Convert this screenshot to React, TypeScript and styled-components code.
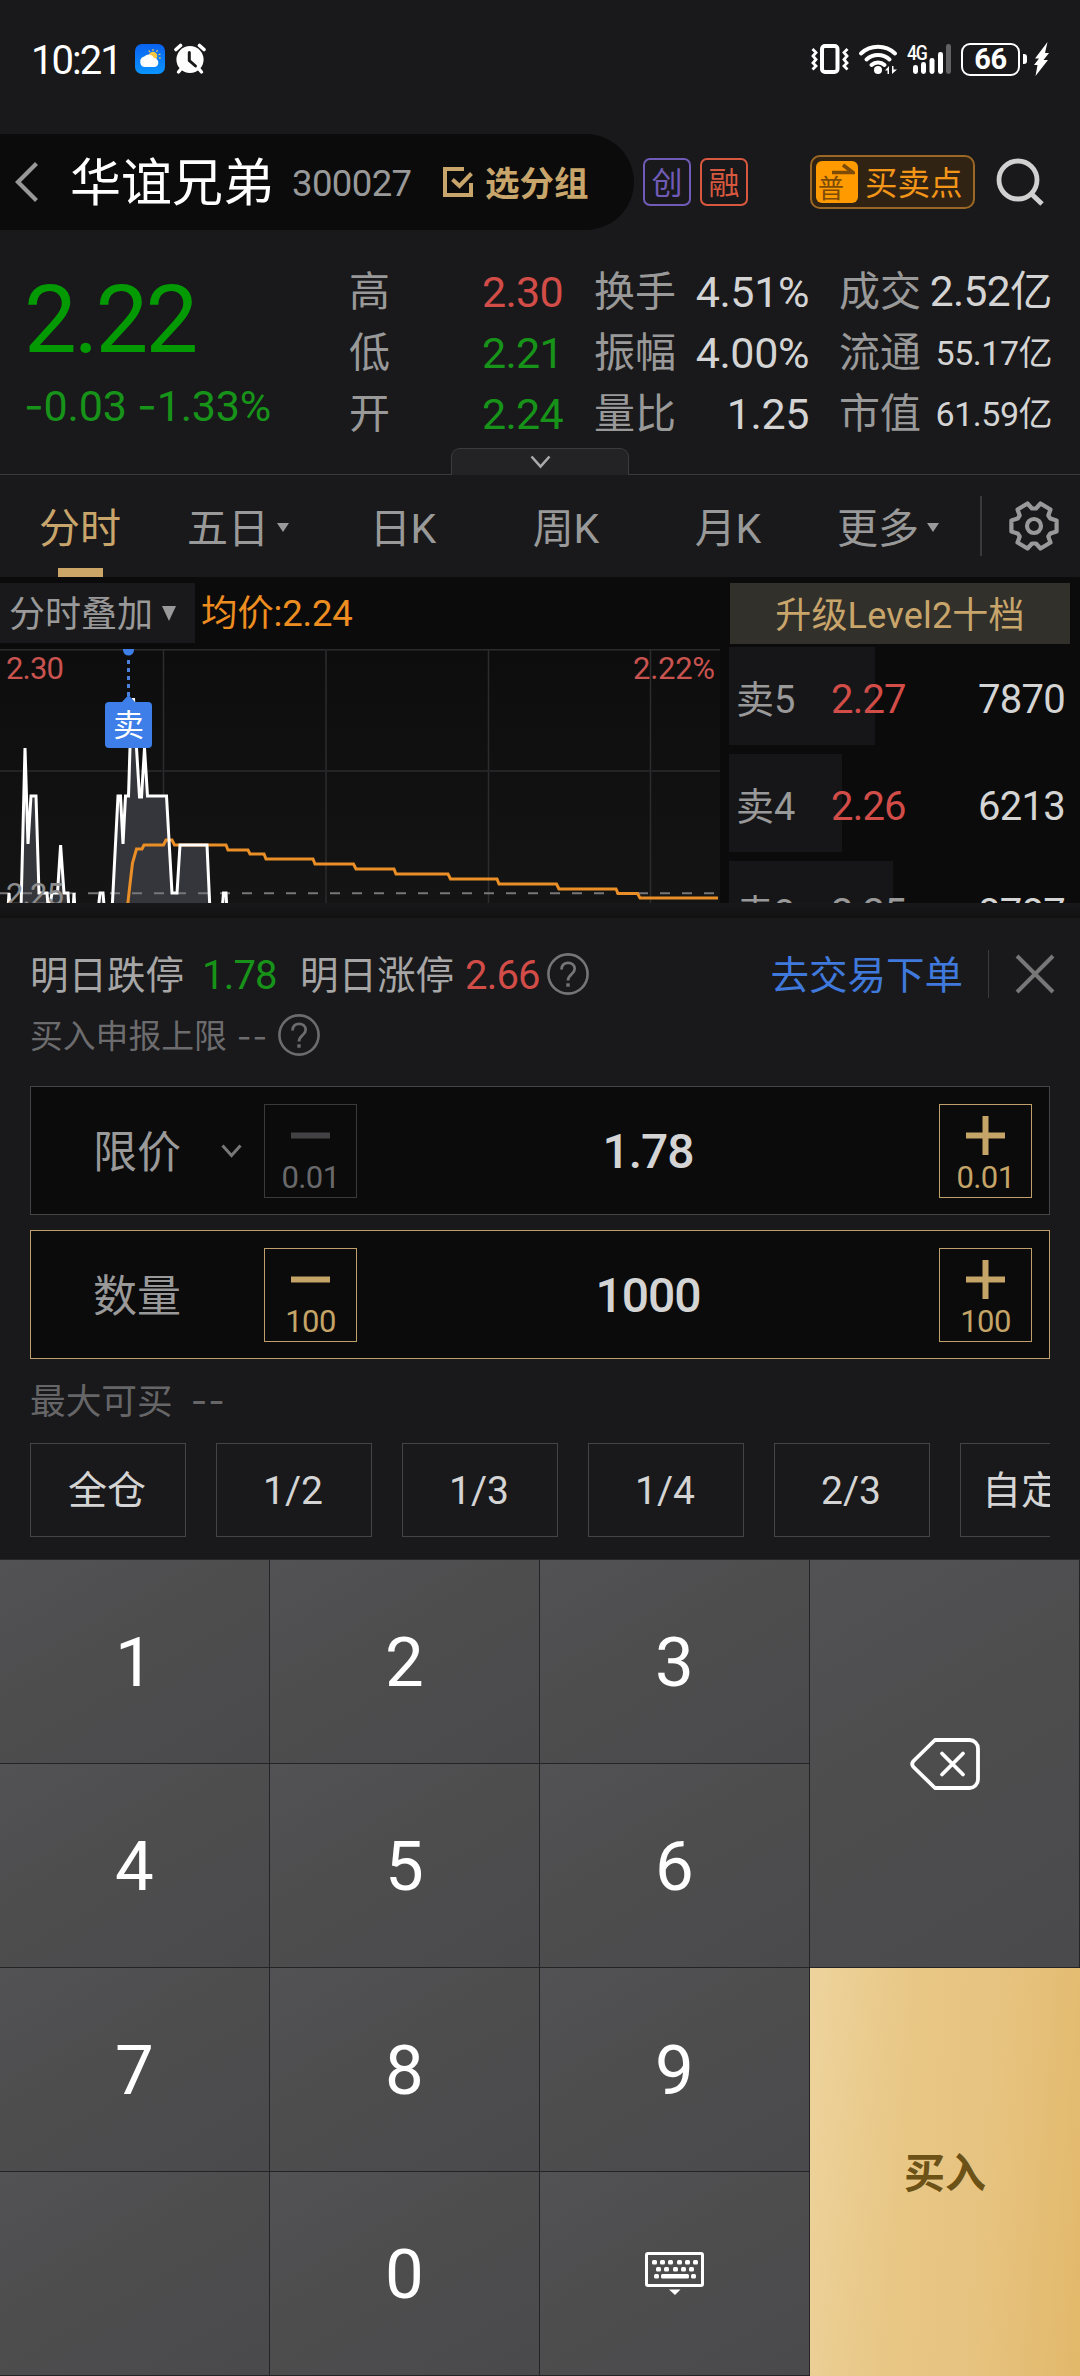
import React from "react";
import styled, { createGlobalStyle } from "styled-components";

const FONT = `Roboto, "Noto Sans CJK SC", sans-serif`;

const C = {
  page: "#19191b",
  ink: "#0b0b0b",
  grey: "#999999",
  dim: "#6c6c6e",
  light: "#d4d4d4",
  gold: "#c8a56a",
  green: "#179319",
  red: "#d24c48",
  orange: "#ee8e20",
  blue: "#4079dc",
  line: "#444446",
};

const Global = createGlobalStyle`
  * { box-sizing: border-box; }
  body { margin: 0; background: ${C.page}; font-family: ${FONT}; }
  svg { display: block; flex: none; }
`;

const Screen = styled.main`
  width: 1080px;
  height: 2376px;
  overflow: hidden;
  display: flex;
  flex-direction: column;
  background: ${C.page};
`;

const Text = styled.span<{ $size: number; $color?: string; $weight?: number; $track?: number; $lh?: number }>`
  display: block;
  flex: none;
  padding-top: 2px;
  margin-bottom: -2px;
  white-space: nowrap;
  font-size: ${(p) => p.$size}px;
  line-height: ${(p) => p.$lh ?? 60}px;
  color: ${(p) => p.$color ?? C.grey};
  font-weight: ${(p) => p.$weight ?? 400};
  letter-spacing: ${(p) => p.$track ?? 0}px;
`;

const Dash = styled.span`
  font-family: Inter, sans-serif;
`;

/* ---------- status bar ---------- */

const StatusBar = styled.header`
  height: 134px;
  flex: none;
  display: flex;
  align-items: flex-start;
  justify-content: space-between;
  padding: 42px 31px 0 31px;
`;
const StatusGroup = styled.div`
  display: flex;
  align-items: center;
  height: 34px;
`;
const Clock = styled(Text)`
  width: 104px;
`;
const Signal = styled.div`
  position: relative;
  width: 46px;
  height: 34px;
  margin: 0 9px 0 8px;
`;
const Network = styled.span`
  position: absolute;
  left: 1px;
  top: 1px;
  font-size: 21px;
  line-height: 20px;
  font-weight: 500;
  letter-spacing: -1.4px;
  color: #fff;
  transform: scaleX(0.84);
  transform-origin: 0 0;
`;
const Battery = styled.div`
  width: 59px;
  height: 33px;
  border: 2.5px solid #fff;
  border-radius: 9px;
  color: #fff;
  font-size: 29px;
  line-height: 29px;
  font-weight: 700;
  letter-spacing: -0.5px;
  text-align: center;
`;
const Nub = styled.i`
  width: 4px;
  height: 10px;
  margin: 0 7px 0 3px;
  border-radius: 0 3px 3px 0;
  background: #fff;
`;

/* ---------- title row ---------- */

const TitleRow = styled.div`
  height: 96px;
  flex: none;
  display: flex;
  align-items: center;
`;
const TitlePill = styled.div`
  width: 634px;
  height: 96px;
  border-radius: 0 48px 48px 0;
  background: ${C.ink};
  display: flex;
  align-items: center;
  padding-left: 14px;
`;
const StockName = styled(Text)`
  width: 222px;
  margin-left: 30px;
`;
const StockCode = styled(Text)`
  width: 151px;
`;
const GroupLabel = styled(Text)`
  margin-left: 12px;
`;
const Badge = styled.span<{ $color: string }>`
  width: 48px;
  height: 48px;
  flex: none;
  margin-left: 9px;
  border: 2px solid ${(p) => p.$color};
  border-radius: 7px;
  color: ${(p) => p.$color};
  font-size: 31px;
  line-height: 47px;
  text-align: center;
`;
const TradePoint = styled.button`
  width: 165px;
  height: 54px;
  flex: none;
  margin: 0 21px 0 62px;
  padding: 0 0 0 4px;
  display: flex;
  align-items: center;
  border: 2px solid #9b6724;
  border-radius: 10px;
  background: #302314;
  font-family: ${FONT};
`;
const TradeMark = styled.span`
  position: relative;
  width: 42px;
  height: 42px;
  flex: none;
  margin-right: 7px;
  padding: 15px 0 0 2px;
  border-radius: 6px;
  background: #ff9a00;
  color: #7c4b08;
  font-size: 26px;
  line-height: 26px;
  text-align: left;
  svg { position: absolute; left: 15px; top: 2px; }
`;

/* ---------- quote ---------- */

const Quote = styled.section`
  position: relative;
  height: 245px;
  flex: none;
  display: flex;
  padding: 30px 0 0 24px;
  border-bottom: 1px solid #3a3a3c;
`;
const PriceBlock = styled.div`
  width: 325px;
  flex: none;
  padding-top: 11px;
`;
const Stats = styled.div`
  display: grid;
  grid-template-columns: 130px 84px 31px 88px 127px 30px 84px 129px;
  grid-auto-rows: 61px;
`;
const Stat = styled(Text)<{ $col: number; $end?: boolean }>`
  grid-column: ${(p) => p.$col};
  justify-self: ${(p) => (p.$end ? "end" : "start")};
`;
const Expander = styled.button`
  position: absolute;
  left: 451px;
  bottom: -1px;
  width: 178px;
  height: 27px;
  padding: 0;
  display: flex;
  justify-content: center;
  border: 1px solid #3c3c3e;
  border-bottom: 0;
  border-radius: 9px 9px 0 0;
  background: #232325;
  svg { margin-top: 6px; }
`;

/* ---------- period tabs ---------- */

const Tabs = styled.nav`
  height: 102px;
  flex: none;
  display: flex;
  align-items: flex-start;
`;
const Tab = styled.div<{ $w: number; $active?: boolean }>`
  width: ${(p) => p.$w}px;
  height: 102px;
  flex: none;
  display: flex;
  flex-direction: column;
  align-items: center;
  justify-content: space-between;
  padding-top: 22px;
  &::after {
    content: "";
    width: 45px;
    height: 9px;
    background: ${(p) => (p.$active ? "#cba666" : "transparent")};
  }
`;
const TabLabel = styled.div`
  display: flex;
  align-items: center;
`;
const Caret = styled.i<{ $w: number; $h: number; $gap: number }>`
  margin-left: ${(p) => p.$gap}px;
  border: ${(p) => p.$w / 2}px solid transparent;
  border-bottom-width: 0;
  border-top: ${(p) => p.$h}px solid ${C.grey};
`;
const TabDivider = styled.i`
  width: 2px;
  height: 60px;
  margin: 21px 26px 0 18px;
  background: #39393b;
`;
const GearBox = styled.div`
  margin-top: 25px;
`;

/* ---------- chart and order book ---------- */

const Market = styled.section`
  height: 326px;
  flex: none;
  display: flex;
  overflow: hidden;
  background: ${C.ink};
`;
const ChartPane = styled.div`
  width: 729px;
  flex: none;
`;
const ChartHead = styled.div`
  height: 72px;
  padding-top: 6px;
  display: flex;
`;
const Overlay = styled.div`
  width: 195px;
  height: 60px;
  margin-right: 6px;
  padding-left: 9px;
  display: flex;
  align-items: center;
  background: ${C.page};
`;
const Plot = styled.div`
  position: relative;
  width: 720px;
  height: 254px;
  background: linear-gradient(#0d0d0d, #141415);
`;
const SellTag = styled.div`
  position: absolute;
  left: 105px;
  top: 53px;
  width: 47px;
  height: 46px;
  border-radius: 4px;
  background: #3d7ee9;
  color: #fff;
  font-size: 31px;
  line-height: 47px;
  text-align: center;
`;
const Book = styled.div`
  flex: 1;
`;
const Upgrade = styled.div`
  width: 340px;
  height: 61px;
  margin: 6px 0 3px 1px;
  background: #32302a;
  text-align: center;
`;
const BookRow = styled.div<{ $bar: number }>`
  height: 98px;
  margin-bottom: 9px;
  padding: 4px 15px 0 7px;
  display: grid;
  grid-template-columns: 95px 110px 1fr;
  align-items: center;
  background: linear-gradient(#161618, #161618) 0 0 / ${(p) => p.$bar}px 100% no-repeat;
`;
const Volume = styled(Text)`
  justify-self: end;
`;
const Seam = styled.div`
  height: 15px;
  flex: none;
  background: linear-gradient(#18181a, #121213);
`;

/* ---------- order panel ---------- */

const Order = styled.section`
  height: 642px;
  flex: none;
  padding: 26px 30px 0;
  border-bottom: 1px solid #28282a;
`;
const Limits = styled.div`
  height: 60px;
  display: flex;
  align-items: center;
  margin-right: -5px;
`;
const LimitLabel = styled(Text)`
  width: 172px;
`;
const LimitPrice = styled(Text)<{ $w: number }>`
  width: ${(p) => p.$w}px;
`;
const Spacer = styled.i`
  flex: 1;
`;
const LimitDivider = styled.i`
  width: 1px;
  height: 48px;
  margin: 0 26px 0 25px;
  background: #3c3c3e;
`;
const CapRow = styled.div`
  height: 62px;
  display: flex;
  align-items: center;
  gap: 10px;
`;
const Field = styled.div<{ $active?: boolean }>`
  height: 129px;
  display: flex;
  align-items: center;
  padding: 0 17px 0 62px;
  border: 1px solid ${(p) => (p.$active ? "#bfa06a" : C.line)};
  background: ${C.ink};
`;
const Fields = styled.div`
  display: grid;
  gap: 15px;
  margin-top: 20px;
`;
const FieldLabel = styled.div`
  width: 171px;
  display: flex;
  align-items: center;
  gap: 40px;
`;
const Step = styled.button<{ $tone: string; $edge: string }>`
  width: 93px;
  height: 94px;
  flex: none;
  padding: 9px 0 0;
  display: flex;
  flex-direction: column;
  align-items: center;
  border: 1px solid ${(p) => p.$edge};
  background: none;
  color: ${(p) => p.$tone};
  font-family: ${FONT};
`;
const FieldValue = styled.div`
  flex: 1;
  padding-top: 3px;
  text-align: center;
  color: ${C.light};
  font-size: 48px;
  line-height: 64px;
  font-weight: 500;
  letter-spacing: -1px;
`;
const MaxRow = styled.div`
  height: 84px;
  display: flex;
  align-items: center;
  gap: 18px;
  padding-bottom: 3px;
`;
const Chips = styled.div`
  display: flex;
  gap: 30px;
  overflow: hidden;
`;
const Chip = styled.button`
  min-width: 156px;
  height: 94px;
  flex: none;
  padding: 2px 23px 0 21px;
  border: 1px solid ${C.line};
  background: none;
  color: ${C.light};
  font-family: ${FONT};
  font-size: 39px;
  line-height: 90px;
`;

/* ---------- keypad ---------- */

const Pad = styled.section`
  flex: 1;
  display: grid;
  grid-template-columns: repeat(4, 270px);
  grid-template-rows: repeat(4, 204px);
`;
const Key = styled.button<{ $area: string }>`
  grid-area: ${(p) => p.$area};
  display: flex;
  align-items: center;
  justify-content: center;
  padding: 3px 0 0;
  border: solid #242426;
  border-width: 0 1px 1px 0;
  background: linear-gradient(150deg, #525254, #4d4d4e 45%, #4a4a4c);
  color: #fff;
  font-family: ${FONT};
  font-size: 69px;
  line-height: 80px;
  font-weight: 450;
`;
const IconKey = styled(Key)`
  padding-top: 0;
`;
const Buy = styled.button`
  grid-area: 3 / 4 / 5 / 5;
  padding: 0 0 4px;
  border: 0;
  background: linear-gradient(95deg, #edd39c, #e8c684 38%, #e7c380 65%, #e2b86a);
  color: #6c5217;
  font-family: ${FONT};
  font-size: 41px;
  font-weight: 700;
`;

/* ---------- drawings ---------- */

const WeatherIcon = () => (
  <svg width="30" height="30" viewBox="0 0 30 30">
    <defs>
      <linearGradient id="sky" x1="0" y1="0" x2="0" y2="1">
        <stop offset="0" stopColor="#0a62f0" />
        <stop offset="1" stopColor="#0a94ff" />
      </linearGradient>
    </defs>
    <rect width="30" height="30" rx="7" fill="url(#sky)" />
    <path d="M18 5v2M22.5 6.2l-1 1.7M25.5 10l-2 .8M25.8 14.2l-2-.3M13.8 6.5l1 1.6" stroke="#f8c94a" strokeWidth="1.2" />
    <circle cx="18" cy="12" r="4.3" fill="#fcc640" />
    <path d="M10 23a5.3 5.3 0 0 1-.8-10.400A5.800 5.800 0 0 1 19 14a4.600 4.600 0 0 1 1 9z" fill="#fdfdfb" />
  </svg>
);

const AlarmIcon = () => (
  <svg width="32" height="32" viewBox="0 0 32 32">
    <path d="M2 6.500 6.500 2.500M30 6.500 25.500 2.500" stroke="#fff" strokeWidth="3.600" strokeLinecap="round" />
    <circle cx="16" cy="16.500" r="13.600" fill="#fff" />
    <path d="M7 26 4.500 29M25 26l2.500 3" stroke="#fff" strokeWidth="3.400" strokeLinecap="round" />
    <path d="M15.300 9.500v8l6.200 5.500" stroke="#19191b" strokeWidth="3" fill="none" strokeLinecap="round" />
  </svg>
);

const VibrateIcon = () => (
  <svg width="38" height="32" viewBox="0 0 38 32">
    <rect x="11" y="3" width="15.500" height="26" rx="3" fill="none" stroke="#fff" strokeWidth="4" />
    <path d="M1.500 6l3.500 3.500-3 3.500 3 3.500-3 3.500 3 3-3.500 3.500M36.500 6 33 9.500l3 3.500-3 3.500 3 3.500-3 3 3.500 3.500" fill="none" stroke="#fff" strokeWidth="2.800" />
  </svg>
);

const WifiIcon = () => (
  <svg width="40" height="32" viewBox="0 0 40 32">
    <g fill="none" stroke="#fff" strokeWidth="4" strokeLinecap="round">
      <path d="M3 10.500a25 25 0 0 1 34 0" />
      <path d="M8.500 16.500a17 17 0 0 1 23 0" />
      <path d="M13.500 22a9.500 9.500 0 0 1 13 0" />
    </g>
    <circle cx="20" cy="27" r="4" fill="#fff" />
    <path d="M27 27.500l4-4.500v8h-1.500v-3.500zM39 26.500 34 31v-8h1.500v3.500z" fill="#fff" />
  </svg>
);

const SignalBars = () => (
  <svg width="46" height="34" viewBox="0 0 46 34">
    {[
      [7, 23],
      [15, 20],
      [23.5, 16],
      [32, 10],
    ].map(([x, y]) => (
      <rect key={x} x={x} y={y} width="5" height={32 - y} rx="2.4" fill="#fff" />
    ))}
    <rect x="40" y="2" width="5" height="30" rx="2.400" fill="#626264" />
  </svg>
);

const BoltIcon = () => (
  <svg width="15" height="34" viewBox="0 0 15 34">
    <path d="M13.500 0 1 16.500h4L0 23h3.500L1.500 34 14 18h-4.500L15 11h-4z" fill="#fff" />
  </svg>
);

const BackIcon = () => (
  <svg width="26" height="42" viewBox="0 0 26 42">
    <path d="M22.500 2.500 4 21l18.500 18.500" fill="none" stroke="#999" strokeWidth="4.200" />
  </svg>
);

const CheckBoxIcon = () => (
  <svg width="30" height="30" viewBox="0 0 30 30" fill="none" stroke={C.gold} strokeWidth="4">
    <path d="M21 2H2v26h26V16" />
    <path d="M9.500 12.500l7 6.500L28.500 6.500" />
  </svg>
);

const SearchIcon = () => (
  <svg width="50" height="50" viewBox="0 0 50 50" fill="none" stroke="#d0d0d0" strokeWidth="4.800">
    <circle cx="22" cy="23" r="19" />
    <path d="M35 36.500l11 10.500" strokeWidth="5" />
  </svg>
);

const Chevron = ({ w, h, sw, color }: { w: number; h: number; sw: number; color: string }) => (
  <svg width={w} height={h} viewBox={`0 0 ${w} ${h}`}>
    <path d={`M1.500 1.500 ${w / 2} ${h - 2.5} ${w - 1.5} 1.500`} fill="none" stroke={color} strokeWidth={sw} />
  </svg>
);

const GearIcon = () => (
  <svg width="52" height="52" viewBox="-26 -26 52 52" fill="none" stroke={C.grey} strokeWidth="4.200" strokeLinejoin="round">
    <path d="M-6.500 -22.500 L-2 -17.500 H2 L6.500 -22.500 L16.500 -16.500 L14.300 -10.500 L16.300 -7.500 L22.600 -5.500 V5.500 L16.300 7.500 L14.300 10.500 L16.500 16.500 L6.500 22.500 L2 17.500 H-2 L-6.500 22.500 L-16.500 16.500 L-14.300 10.500 L-16.300 7.500 L-22.600 5.500 V-5.500 L-16.300 -7.500 L-14.300 -10.500 L-16.500 -16.500Z" />
    <circle r="7" />
  </svg>
);

const HelpIcon = ({ color }: { color: string }) => (
  <svg width="42" height="42" viewBox="0 0 42 42" fill="none" stroke={color}>
    <circle cx="21" cy="21" r="19.600" strokeWidth="2.600" />
    <path d="M14.500 16.500c0-4.300 2.800-6.700 6.600-6.700s6.600 2.400 6.600 6c0 5.400-6.700 5.600-6.700 11.700" strokeWidth="2.800" />
    <path d="M21 30.300v3.400" strokeWidth="3.400" />
  </svg>
);

const CloseIcon = () => (
  <svg width="40" height="40" viewBox="0 0 40 40">
    <path d="M2 2l36 36M38 2 2 38" stroke="#777" strokeWidth="4" />
  </svg>
);

const StepIcon = ({ plus, color }: { plus?: boolean; color: string }) => (
  <svg width="39" height="44" viewBox="0 0 39 44">
    <path d={plus ? "M0 21.500h39M19.500 2v39" : "M0 21.500h39"} stroke={color} strokeWidth="6" />
  </svg>
);

const BackspaceIcon = () => (
  <svg width="70" height="52" viewBox="0 0 70 52" fill="none" stroke="#fff" strokeWidth="3.800" strokeLinejoin="round" strokeLinecap="round">
    <path d="M25 2h34.500a8.500 8.500 0 0 1 8.500 8.500v31a8.500 8.500 0 0 1-8.500 8.500H25L3.500 29q-2.600-3 0-6z" />
    <path d="M32 15.500l21 21M53 15.500l-21 21" />
  </svg>
);

const KeyboardIcon = () => {
  const rows = [
    [7, 15, 23, 32, 40, 48],
    [11, 19, 28, 36, 44],
  ];
  return (
    <svg width="59" height="43" viewBox="0 0 59 43">
      <rect x="1.500" y="1.500" width="56" height="32" rx="1.500" fill="none" stroke="#fff" strokeWidth="3" />
      {rows.map((xs, r) => xs.map((x) => <rect key={`${r}-${x}`} x={x} y={8 + r * 7} width="5" height="4.500" rx="1.500" fill="#fff" />))}
      <rect x="9" y="22" width="5" height="4.500" rx="1.500" fill="#fff" />
      <rect x="16" y="22" width="28" height="4.500" rx="1.500" fill="#fff" />
      <rect x="46" y="22" width="5" height="4.500" rx="1.500" fill="#fff" />
      <path d="M24 37.500h11.500L30 43z" fill="#fff" />
    </svg>
  );
};

const PRICE =
  "8,260 9,244 10,260 21,260 25,99 28,195 31,147 36,147 39,244 47,244 48,256 50,256 52,244 57.500,244 60.600,196 64,244 68,244 69,262 73,262 74,244 75,262 98,262 100,244 103,244 104.500,262 112,262 118,147 120.500,147 123,195 125.500,147 128.500,147 130,99 133.500,49 136.500,99 139.500,148 141.500,148 144.500,99 147.500,147 166.500,147 172,244 177,244 180,196 207,196 210,262 222,262 223.500,244 226,244 227,262";
const AVERAGE =
  "127,262 130,235 132.500,214 136.500,200 142,200 144,196 163.500,196 166,191 172,191 174.500,196 226,196 228,201 248,201 250,205 264,205 266,210 313,210 315,215 353.500,215 356,220 394,220 396,225 448,225 450.500,230 497,230 499,235 556.500,235 559,240 616,240 618,244.500 637.500,244.500 640,249 718,249";

const PlotLines = () => (
  <svg width="720" height="254" viewBox="0 0 720 254" fontFamily={FONT}>
    <g stroke="#2c2c2e" strokeWidth="1.500">
      <path d="M0 .8H720M163.500 0V254M488.500 0V254M650.500 0V254" />
      <path d="M0 122H720M326 0V254" stroke="#242426" strokeWidth="2" />
    </g>
    <polygon points={`0,262 ${PRICE}`} fill="#35363b" />
    <path d="M0 244.300H720" stroke="#77777a" strokeWidth="2" strokeDasharray="10 12" />
    <polyline points={AVERAGE} fill="none" stroke="#ea8f27" strokeWidth="3" />
    <polyline points={PRICE} fill="none" stroke="#fff" strokeWidth="3" strokeLinejoin="miter" />
    <g fontSize="31" fill="#c9534f">
      <text x="6" y="30" textLength="58">2.30</text>
      <text x="633" y="30" textLength="82">2.22%</text>
    </g>
    <text x="6" y="256" fontSize="31" fill="#8d8d8d" textLength="58">2.25</text>
    <circle cx="128.500" cy="1" r="5.500" fill="#3d7ee9" />
    <path d="M128.500 11V48" stroke="#4a82dd" strokeWidth="3" strokeDasharray="4 4" />
    <path d="M121 54l7.500-8 7.500 8z" fill="#3d7ee9" />
  </svg>
);

/* ---------- data ---------- */

const STATS = [
  { a: "高", b: "2.30", tone: C.red, c: "换手", d: "4.51%", e: "成交", f: "2.52亿", big: true },
  { a: "低", b: "2.21", tone: C.green, c: "振幅", d: "4.00%", e: "流通", f: "55.17亿" },
  { a: "开", b: "2.24", tone: C.green, c: "量比", d: "1.25", e: "市值", f: "61.59亿" },
];

const TABS = [
  { label: "分时", w: 160, active: true },
  { label: "五日", w: 156, menu: true },
  { label: "日K", w: 174 },
  { label: "周K", w: 152 },
  { label: "月K", w: 172 },
  { label: "更多", w: 148, menu: true },
];

const ASKS = [
  { level: "卖5", price: "2.27", volume: "7870", bar: 146, tone: C.red },
  { level: "卖4", price: "2.26", volume: "6213", bar: 113, tone: C.red },
  { level: "卖3", price: "2.25", volume: "8787", bar: 164, tone: C.grey },
];

const CHIPS = ["全仓", "1/2", "1/3", "1/4", "2/3", "自定义"];

const FIELDS = [
  { label: "限价", menu: true, value: "1.78", step: "0.01", off: true },
  { label: "数量", value: "1000", step: "100", active: true },
];

export default function App() {
  return (
    <Screen>
      <Global />
      <StatusBar>
        <StatusGroup>
          <Clock $size={40} $color="#fff" $weight={450} $track={-2} $lh={34}>10:21</Clock>
          <WeatherIcon />
          <i style={{ width: 9 }} />
          <AlarmIcon />
        </StatusGroup>
        <StatusGroup>
          <VibrateIcon />
          <i style={{ width: 9 }} />
          <WifiIcon />
          <Signal>
            <SignalBars />
            <Network>4G</Network>
          </Signal>
          <Battery>66</Battery>
          <Nub />
          <BoltIcon />
        </StatusGroup>
      </StatusBar>

      <TitleRow>
        <TitlePill>
          <BackIcon />
          <StockName $size={51} $color="#fff" $weight={400}>华谊兄弟</StockName>
          <StockCode $size={36.5} $track={-0.6}>300027</StockCode>
          <CheckBoxIcon />
          <GroupLabel $size={34.5} $color={C.gold} $weight={700}>选分组</GroupLabel>
        </TitlePill>
        <Badge $color="#705cb8">创</Badge>
        <Badge $color="#d8583f">融</Badge>
        <TradePoint>
          <TradeMark>
            普
            <svg width="24" height="12" viewBox="0 0 24 12">
              <path d="M1 9.500h21L12 2" fill="none" stroke="#7c4b08" strokeWidth="3.600" />
            </svg>
          </TradeMark>
          <Text $size={32.5} $color="#f39618" $lh={48}>买卖点</Text>
        </TradePoint>
        <SearchIcon />
      </TitleRow>

      <Quote>
        <PriceBlock>
          <Text $size={94} $color="#039a03" $track={-3} $lh={94}>2.22</Text>
          <Text $size={43} $color={C.green} $track={-0.2} $lh={76}>
            <Dash>-</Dash>0.03 <Dash>-</Dash>1.33%
          </Text>
        </PriceBlock>
        <Stats>
          {STATS.map((s) => (
            <React.Fragment key={s.a}>
              <Stat $col={1} $size={41}>{s.a}</Stat>
              <Stat $col={2} $end $size={43} $color={s.tone} $track={-0.7}>{s.b}</Stat>
              <Stat $col={4} $size={41}>{s.c}</Stat>
              <Stat $col={5} $end $size={43} $color={C.light} $track={-0.4}>{s.d}</Stat>
              <Stat $col={7} $size={41}>{s.e}</Stat>
              <Stat $col={8} $end $size={s.big ? 42.5 : 34} $color={C.light} $track={s.big ? -0.6 : -0.5}>{s.f}</Stat>
            </React.Fragment>
          ))}
        </Stats>
        <Expander>
          <Chevron w={21} h={14} sw={2.6} color="#aaa" />
        </Expander>
      </Quote>

      <Tabs>
        {TABS.map((t) => (
          <Tab key={t.label} $w={t.w} $active={t.active}>
            <TabLabel>
              <Text $size={41} $color={t.active ? C.gold : C.grey}>{t.label}</Text>
              {t.menu && <Caret $w={12} $h={9} $gap={8} />}
            </TabLabel>
          </Tab>
        ))}
        <TabDivider />
        <GearBox>
          <GearIcon />
        </GearBox>
      </Tabs>

      <Market>
        <ChartPane>
          <ChartHead>
            <Overlay>
              <Text $size={36}>分时叠加</Text>
              <Caret $w={15} $h={15} $gap={9} />
            </Overlay>
            <Text $size={36.5} $color={C.orange} $track={-0.2} $lh={58}>均价:2.24</Text>
          </ChartHead>
          <Plot>
            <PlotLines />
            <SellTag>卖</SellTag>
          </Plot>
        </ChartPane>
        <Book>
          <Upgrade>
            <Text $size={36} $color={C.gold} $track={0.2} $lh={62}>升级Level2十档</Text>
          </Upgrade>
          {ASKS.map((a) => (
            <BookRow key={a.level} $bar={a.bar}>
              <Text $size={38} $track={0}>{a.level}</Text>
              <Text $size={40} $color={a.tone} $track={-0.8}>{a.price}</Text>
              <Volume $size={40} $color={C.light} $track={-0.7}>{a.volume}</Volume>
            </BookRow>
          ))}
        </Book>
      </Market>
      <Seam />

      <Order>
        <Limits>
          <LimitLabel $size={38.5} $color="#a6a6a6">明日跌停</LimitLabel>
          <LimitPrice $w={98} $size={40} $color={C.green} $track={-0.8}>1.78</LimitPrice>
          <LimitLabel as="span" style={{ width: 165 }} $size={38.5} $color="#a6a6a6">明日涨停</LimitLabel>
          <LimitPrice $w={82} $size={40} $color={C.red} $track={-0.8}>2.66</LimitPrice>
          <HelpIcon color="#757577" />
          <Spacer />
          <Text $size={38.5} $color={C.blue}>去交易下单</Text>
          <LimitDivider />
          <CloseIcon />
        </Limits>
        <CapRow>
          <Text $size={32.8} $color={C.dim}>买入申报上限</Text>
          <Text $size={32} $color={C.dim} $track={1}><Dash>--</Dash></Text>
          <HelpIcon color="#6c6c6e" />
        </CapRow>
        <Fields>
          {FIELDS.map((f) => {
            const tone = f.off ? "#69696b" : "#c4a467";
            return (
              <Field key={f.label} $active={f.active}>
                <FieldLabel>
                  <Text $size={44}>{f.label}</Text>
                  {f.menu && <Chevron w={21} h={14} sw={3} color="#777" />}
                </FieldLabel>
                <Step $tone={tone} $edge={f.off ? "#3a3a3c" : "#bfa06a"}>
                  <StepIcon color={f.off ? "#424244" : "#c4a467"} />
                  <Text $size={31} $color={tone} $track={-0.6} $lh={36}>{f.step}</Text>
                </Step>
                <FieldValue>{f.value}</FieldValue>
                <Step $tone="#c4a467" $edge="#bfa06a">
                  <StepIcon plus color="#c4a467" />
                  <Text $size={31} $color="#c4a467" $track={-0.6} $lh={36}>{f.step}</Text>
                </Step>
              </Field>
            );
          })}
        </Fields>
        <MaxRow>
          <Text $size={35.7} $color="#666668">最大可买</Text>
          <Text $size={36} $color="#666668" $track={1}><Dash>--</Dash></Text>
        </MaxRow>
        <Chips>
          {CHIPS.map((c) => (
            <Chip key={c}>{c}</Chip>
          ))}
        </Chips>
      </Order>

      <Pad>
        {[1, 2, 3, 4, 5, 6, 7, 8, 9].map((n) => (
          <Key key={n} $area={`${Math.ceil(n / 3)} / ${((n - 1) % 3) + 1}`}>{n}</Key>
        ))}
        <Key $area="4 / 1" />
        <Key $area="4 / 2">0</Key>
        <IconKey $area="4 / 3"><KeyboardIcon /></IconKey>
        <IconKey $area="1 / 4 / 3 / 5"><BackspaceIcon /></IconKey>
        <Buy>买入</Buy>
      </Pad>
    </Screen>
  );
}
